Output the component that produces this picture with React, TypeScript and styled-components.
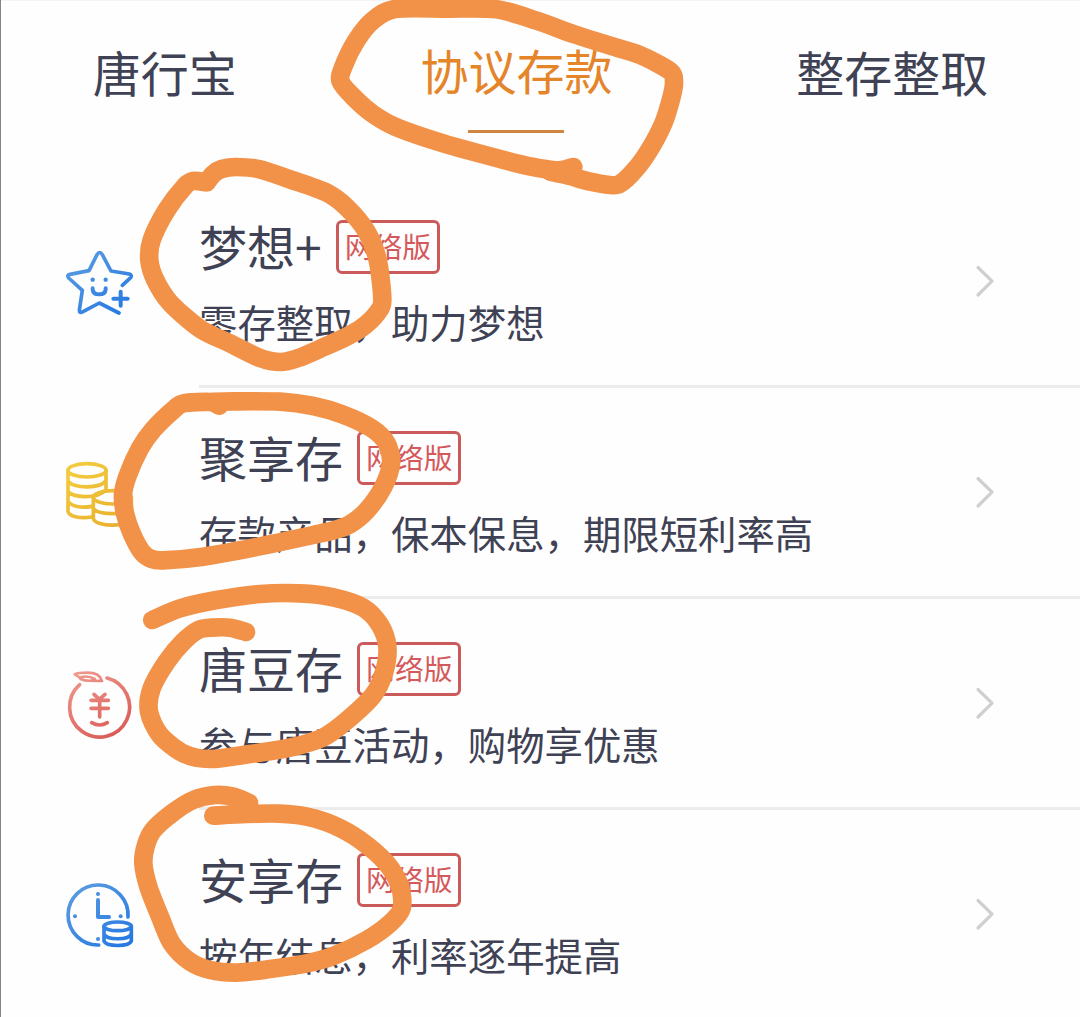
import React from 'react';
import styled, { createGlobalStyle } from 'styled-components';

const GlobalStyle = createGlobalStyle`
  body { margin: 0; background: #fefefe; }
  * { box-sizing: border-box; }
`;

const Screen = styled.main`
  position: relative;
  width: 1080px;
  height: 1017px;
  overflow: hidden;
  background: #fefefe;
  box-shadow: inset 1px 0 0 #858585, inset 0 1px 0 #f6f3f5;
  color: #3f4254;
  font-family: 'Noto Sans CJK SC', sans-serif;
  -webkit-font-smoothing: antialiased;
`;

const Tabs = styled.nav`
  display: flex;
  justify-content: space-around;
  height: 177px;
  padding-left: 1px;
`;

const Tab = styled.div<{ $active?: boolean }>`
  display: flex;
  flex-direction: column;
  align-items: center;
  padding-top: ${(p) => (p.$active ? 33 : 35)}px;
  font-size: 48px;
  line-height: 72px;
  color: ${(p) => (p.$active ? '#e5852a' : 'inherit')};
`;

const Underline = styled.span`
  width: 96px;
  height: 3px;
  margin-top: 25px;
  background: #cf8640;
`;

const Row = styled.section`
  display: flex;
  height: 211px;
  padding-left: 50px;
`;

const IconBox = styled.svg`
  flex: none;
  width: 100px;
  height: 100px;
  margin: 58px 49px 0 0;
  fill: none;
  stroke-linecap: round;
  stroke-linejoin: round;
`;

const RowBody = styled.div<{ $last?: boolean }>`
  display: flex;
  flex: 1;
  align-items: center;
  justify-content: space-between;
  padding-right: 85px;
  border-bottom: 3px solid ${(p) => (p.$last ? 'transparent' : '#ececec')};
`;

const Info = styled.div`
  align-self: flex-start;
  padding-top: 32px;
`;

const TitleLine = styled.div`
  display: flex;
  align-items: center;
  gap: 14.3px;
  height: 72px;
  font-size: 48px;
  line-height: 72px;
`;

const Badge = styled.span`
  display: flex;
  align-items: center;
  justify-content: center;
  width: 104px;
  height: 54px;
  margin-top: 4px;
  padding-bottom: 2px;
  border: 3px solid #cb5a5b;
  border-radius: 6px;
  font-size: 28.8px;
  line-height: 46px;
  color: #d4595b;
`;

const Description = styled.p`
  margin: 11px 0 0;
  font-size: 38.4px;
  line-height: 58px;
  white-space: nowrap;
`;

const Arrow = styled.svg`
  width: 20px;
  height: 34px;
  fill: none;
  stroke: #cfcfcf;
  stroke-width: 3.2;
  stroke-linecap: round;
  stroke-linejoin: round;
`;

const InkLayer = styled.svg`
  position: absolute;
  inset: 0;
  width: 1080px;
  height: 1017px;
  pointer-events: none;
  fill: none;
  stroke: #f29249;
  stroke-linecap: round;
  stroke-linejoin: round;
`;

const StarIcon = () => (
  <IconBox viewBox="0 0 300 300" stroke="url(#blue)" strokeWidth="11">
    <path d="M217 151 L242 128 Q247 120 238 117 L183 108 L157 59 Q149 46 141 59 L117 107 L60 118 Q49 120 56 129 L97 166 L88 226 Q88 236 99 230 L148 204 L207 234" />
    <path d="M128 160 V163 Q129 178 147 178 Q166 178 167 163 V160 M190 191 H233 M212 170 V212" strokeWidth="12" />
    <g fill="#3f8ce0" stroke="none"><circle cx="128" cy="134" r="6.5" /><circle cx="167" cy="134" r="6.5" /></g>
  </IconBox>
);

const CoinsIcon = () => (
  <IconBox viewBox="0 3 300 300" stroke="url(#gold)" strokeWidth="11">
    <ellipse cx="111" cy="76" rx="57" ry="20" />
    <path d="M54 76 V199 C57 214 88 221 125 216 M168 76 V132 M54 107 C64 130 154 134 168 105 M54 138 C65 159 142 163 168 134 M54 168 C63 185 95 190 125 184 M54 198 V78" />
    <ellipse cx="187" cy="157" rx="57" ry="20" />
    <path d="M130 157 V221 C136 247 238 247 244 221 V157 M130 190 C143 211 231 211 244 190" />
  </IconBox>
);

const PeachIcon = () => (
  <IconBox viewBox="0 8 300 300" stroke="url(#red)" strokeWidth="11">
    <path d="M89 91 A90 90 0 1 0 171 71" />
    <path d="M74 60 Q83 55 113 55 Q149 55 156 80 Q137 80 123 79 Q105 80 92 74 Q88 67 74 60 Z M94 68 Q116 63 134 74" strokeWidth="8" />
    <path d="M132 120 L148 135 L165 120 M123 138 H175 M123 162 H175 M149 136 V188" />
    <path d="M125 205 Q149 219 172 205" />
  </IconBox>
);

const ClockIcon = () => (
  <IconBox viewBox="0 6 300 300" stroke="url(#blue)" strokeWidth="11">
    <path d="M234 153 A90 90 0 1 0 146 237" />
    <path d="M144 102 V153 H177" strokeWidth="12" />
    <g fill="#438ce0" stroke="none"><circle cx="144" cy="84" r="6" /><circle cx="75" cy="151" r="6" /><circle cx="212" cy="151" r="6" /><circle cx="144" cy="219" r="6" /></g>
    <ellipse cx="203" cy="181" rx="41" ry="13" />
    <path d="M162 181 V225 C169 243 237 243 244 225 V181 M162 204 C170 223 236 223 244 204" />
  </IconBox>
);

type Product = { title: string; description: string; Icon: React.FC };

const products: Product[] = [
  { title: '梦想+', description: '零存整取，助力梦想', Icon: StarIcon },
  { title: '聚享存', description: '存款产品，保本保息，期限短利率高', Icon: CoinsIcon },
  { title: '唐豆存', description: '参与唐豆活动，购物享优惠', Icon: PeachIcon },
  { title: '安享存', description: '按年结息，利率逐年提高', Icon: ClockIcon },
];

type Ink = { x: number; y: number; points: number[][] };

// Marker strokes, sampled at three points per pixel from each origin.
const inkStrokes: Ink[] = [
  { x: 320, y: 0, points: [[760,501],[735,508],[705,511],[640,501],[560,482],[370,430],[230,382],[160,343],[105,296],[62,245],[70,200],[110,120],[160,60],[225,27],[380,26],[530,28],[650,62],[760,102],[870,137],[960,165],[1050,213],[1062,245],[1055,290],[1030,370],[985,455],[940,515],[890,555],[810,545],[750,528],[690,515]] },
  { x: 130, y: 150, points: [[230,97],[250,72],[275,57],[320,51],[390,58],[480,88],[590,128],[650,172],[710,245],[743,330],[757,450],[743,487],[700,530],[650,560],[580,592],[505,624],[452,636],[390,624],[300,580],[210,536],[120,458],[75,388],[58,330],[65,270],[110,180],[165,108],[190,93],[228,97]] },
  { x: 100, y: 380, points: [[358,77],[330,66],[250,70],[222,88],[160,148],[120,205],[82,290],[69,345],[75,400],[95,460],[125,515],[155,537],[190,541],[310,530],[460,503],[640,465],[705,450],[750,433],[800,392],[850,320],[873,250],[860,190],[815,145],[730,104],[640,78],[540,65],[400,64],[330,66]] },
  { x: 130, y: 575, points: [[67,135],[150,100],[260,75],[390,57],[510,55],[610,67],[700,98],[750,150],[772,215],[763,290],[730,360],[650,437],[580,487],[480,518],[360,537],[240,552],[160,535],[90,480],[57,410],[65,340],[110,260],[160,200],[205,165],[245,158],[300,158],[348,171]] },
  { x: 120, y: 780, points: [[387,69],[340,50],[285,45],[220,60],[160,97],[100,150],[78,195],[70,250],[85,320],[120,410],[155,490],[210,545],[270,570],[350,578],[450,567],[560,550],[640,528],[740,480],[810,430],[845,385],[840,320],[800,250],[720,180],[640,135],[560,110],[480,101],[380,102],[280,107]] },
];

// Catmull-Rom spline through the sampled points.
const smooth = (p: number[][]) =>
  p.slice(1).reduce((path, end, i) => {
    const start = p[i];
    const before = p[i - 1] || start;
    const after = p[i + 2] || end;
    const c1 = start.map((v, k) => v + (end[k] - before[k]) / 7);
    const c2 = end.map((v, k) => v - (after[k] - start[k]) / 7);
    return `${path} C${c1.join(' ')} ${c2.join(' ')} ${end.join(' ')}`;
  }, `M${p[0].join(' ')}`);

export default function App() {
  return (
    <>
      <GlobalStyle />
      <Screen>
        <Tabs>
          <Tab>唐行宝</Tab>
          <Tab $active>协议存款<Underline /></Tab>
          <Tab>整存整取</Tab>
        </Tabs>
        {products.map(({ title, description, Icon }, i) => (
          <Row key={title}>
            <Icon />
            <RowBody $last={i === products.length - 1}>
              <Info>
                <TitleLine>{title}<Badge>网络版</Badge></TitleLine>
                <Description>{description}</Description>
              </Info>
              <Arrow viewBox="0 0 20 34"><path d="M3 3.5 L17 17.2 L3 31" /></Arrow>
            </RowBody>
          </Row>
        ))}
        <InkLayer viewBox="0 0 1080 1017">
          <defs>
            <linearGradient id="blue" gradientUnits="userSpaceOnUse" x1="50" y1="50" x2="220" y2="250"><stop stopColor="#609fe0" /><stop offset="1" stopColor="#2478e2" /></linearGradient>
            <linearGradient id="gold" gradientUnits="userSpaceOnUse" x1="50" y1="50" x2="200" y2="250"><stop stopColor="#f3ce3e" /><stop offset="1" stopColor="#e9af2e" /></linearGradient>
            <linearGradient id="red" gradientUnits="userSpaceOnUse" x1="80" y1="50" x2="200" y2="250"><stop stopColor="#ef9a8d" /><stop offset="1" stopColor="#d95955" /></linearGradient>
          </defs>
          {inkStrokes.map((s) => (
            <path key={s.y} d={smooth(s.points)} strokeWidth="56" transform={`translate(${s.x} ${s.y}) scale(${1 / 3})`} />
          ))}
        </InkLayer>
      </Screen>
    </>
  );
}
